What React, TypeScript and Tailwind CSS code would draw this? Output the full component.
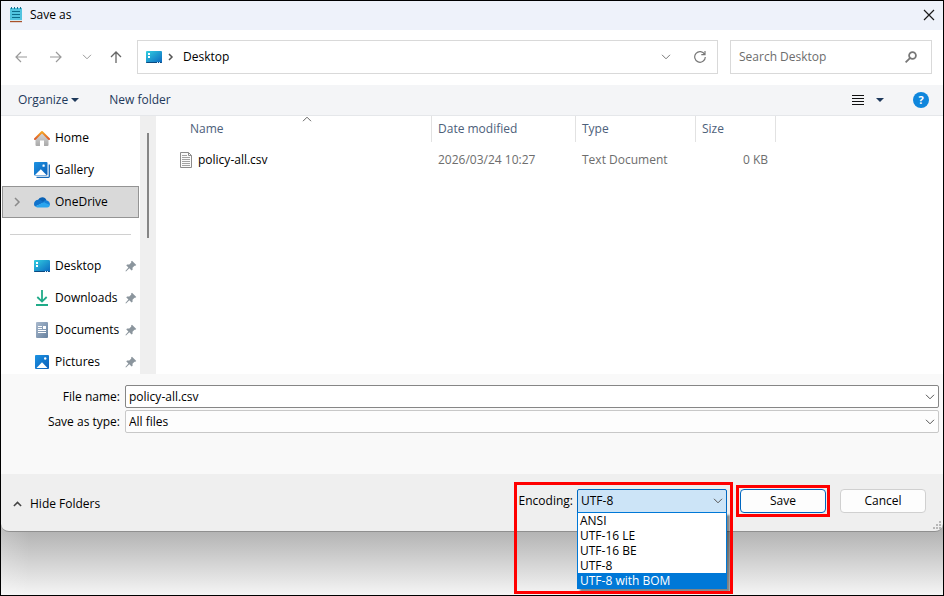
import type { ReactNode } from 'react';

const encodings = ['ANSI', 'UTF-16 LE', 'UTF-16 BE', 'UTF-8', 'UTF-8 with BOM'];

function Chevron({ className = '' }: { className?: string }) {
  return (
    <svg viewBox="0 0 10 6" className={`w-[10px] h-[6px] ${className}`} fill="none" stroke="currentColor" aria-hidden="true">
      <path d="M1 .8 5 4.8 9 .8" />
    </svg>
  );
}

function CaretDown() {
  return (
    <svg viewBox="0 0 8 4" className="w-2 h-1" fill="#1e395b" aria-hidden="true">
      <path d="M0 0h8L4 4z" />
    </svg>
  );
}

function NotepadIcon() {
  return (
    <svg viewBox="0 0 12 17" className="w-3 h-[17px]" aria-hidden="true">
      <rect y="2" width="12" height="13" fill="#50c4e0" />
      <rect y="15" width="12" height="1.2" fill="#a9512a" />
      <rect y="14" width="12" height="1" fill="#d5e9ee" />
      <path d="M1.5 1v2M4.5 1v2M7.5 1v2M10.5 1v2" stroke="#17708f" />
      <path d="M2 5.5h8M2 8.500h8M2 11.500h8" stroke="#0c6c8b" />
    </svg>
  );
}

function DesktopIcon() {
  return (
    <svg viewBox="0 0 16 12" className="w-4 h-3" aria-hidden="true">
      <defs>
        <linearGradient id="desk" x1="0" y1="0" x2="1" y2="1">
          <stop offset="0" stopColor="#32cfe0" />
          <stop offset="1" stopColor="#0a66c0" />
        </linearGradient>
      </defs>
      <rect width="16" height="12" rx="1" fill="url(#desk)" />
      <path d="M0 11h16a1 1 0 0 1-1 1H1a1 1 0 0 1-1-1z" fill="#0b4a80" />
      <path d="M2 2h2v2H2zM2 5h2v2H2z" fill="#fff" />
      <path d="M11 11h1v1h-1zM13 11h1v1h-1z" fill="#d6ecff" />
    </svg>
  );
}

function HomeIcon() {
  return (
    <svg viewBox="0 0 16 16" className="w-4 h-4" aria-hidden="true">
      <defs>
        <linearGradient id="house" x1="0" y1="0" x2="0" y2="1">
          <stop offset="0" stopColor="#d9d9d9" />
          <stop offset="1" stopColor="#a9a9a9" />
        </linearGradient>
        <linearGradient id="roof" x1="0" y1="0" x2="0" y2="1">
          <stop offset="0" stopColor="#f5a623" />
          <stop offset="1" stopColor="#dd5b2b" />
        </linearGradient>
      </defs>
      <path d="M8 2.500 14.500 8.500V15a1 1 0 0 1-1 1H10v-5.500H6V16H2.500a1 1 0 0 1-1-1V8.500z" fill="url(#house)" />
      <path d="M1 9 8 2l7 7" fill="none" stroke="url(#roof)" strokeWidth="2" strokeLinecap="round" strokeLinejoin="round" />
    </svg>
  );
}

function PictureIcon({ stacked = false }: { stacked?: boolean }) {
  return (
    <svg viewBox="0 0 16 16" className="w-4 h-4" aria-hidden="true">
      <defs>
        <linearGradient id="pic" x1="0" y1="0" x2="1" y2="1">
          <stop offset="0" stopColor="#1c93e3" />
          <stop offset="1" stopColor="#0c5fb8" />
        </linearGradient>
      </defs>
      {stacked ? (
        <>
          <path d="M15.300 2.500V14.500a.8.8 0 0 1-.8.8H2.500" fill="none" stroke="#1668b8" strokeWidth="1.300" />
          <rect width="13.500" height="13.500" rx="1" fill="url(#pic)" />
          <path d="M1 13 6.800 7.200 12.500 13z" fill="#fff" />
          <rect x="8.500" y="2.500" width="2.200" height="2.200" rx=".5" fill="#fff" />
        </>
      ) : (
        <>
          <rect x="1" y="1" width="14" height="14" rx="1" fill="url(#pic)" />
          <path d="M2.500 14 8 8.300 13.500 14z" fill="#fff" />
          <circle cx="11.200" cy="4.500" r="1.200" fill="#fff" />
        </>
      )}
    </svg>
  );
}

function OneDriveIcon() {
  return (
    <svg viewBox="0 0 16 16" className="w-4 h-4" aria-hidden="true">
      <path d="M4 6a4.600 4.600 0 0 1 8.500.3L9 10z" fill="#0a62b5" />
      <path d="M4.500 5.800C2 5.700 0 7.600 0 10c0 1.200.5 2 1.200 2.600L10 8.600 7.500 6.800a5 5 0 0 0-3-1z" fill="#1173cc" />
      <path d="M12 6.200a4 4 0 0 0-2.800 1.300L13.500 12l2.300-1A4 4 0 0 0 12 6.200z" fill="#1580d8" />
      <path d="M1.200 12.600 9.500 8.200l6.300 2.600a2.600 2.600 0 0 1-2.600 2.600H3.200c-.8 0-1.500-.3-2-.8z" fill="#2aa5ee" />
    </svg>
  );
}

function DownloadIcon() {
  return (
    <svg viewBox="0 0 16 16" className="w-4 h-4" fill="none" stroke="#20ab89" strokeWidth="1.800" aria-hidden="true">
      <path d="M8 0v11M3.300 7 8 11.600 12.700 7M2 15h12" />
    </svg>
  );
}

function DocumentIcon() {
  return (
    <svg viewBox="0 0 16 16" className="w-4 h-4" aria-hidden="true">
      <defs>
        <linearGradient id="doc" x1="0" y1="0" x2="1" y2="1">
          <stop offset="0" stopColor="#a9b9cd" />
          <stop offset="1" stopColor="#66819f" />
        </linearGradient>
      </defs>
      <rect x="2" width="12" height="16" rx="1" fill="url(#doc)" />
      <path d="M4 4.500h4M4 6.500h4M4 8.500h8M4 10.500h8" stroke="#fff" />
      <rect x="9" y="4" width="3" height="3" fill="#fff" />
    </svg>
  );
}

function PinIcon() {
  return (
    <svg viewBox="0 0 12 12" className="w-3 h-3" aria-hidden="true">
      <path d="M7 .8 11.300 5l-1 .8-.8-.1-2 2 .1 2-1 .9-2.300-2.300L1 11.500l-.6-.6 3-3.400L1.200 5.300l1-.9 2.100.1 2-2-.2-.9z" fill="#8b959d" />
    </svg>
  );
}

function FileIcon() {
  return (
    <svg viewBox="0 0 12 16" className="w-3 h-4 shrink-0" fill="none" stroke="#8c8c8c" aria-hidden="true">
      <path d="M.5.500h8l3 3v12H.5z" fill="#fbfbfb" />
      <path d="M8.500.500v3h3" />
      <path d="M2 3.500h5M2 5.500h8M2 7.500h8M2 9.500h8M2 11.500h8M2 13.500h8" stroke="#a3a3a3" />
    </svg>
  );
}

function NavItem({ icon, label, pinned, selected }: { icon: ReactNode; label: string; pinned?: boolean; selected?: boolean }) {
  return (
    <li>
      <a
        href="#"
        className={
          selected
            ? 'flex items-center h-8 ml-px mr-px pl-[9px] pr-1 border border-[#949494] bg-[#d9d9d9]'
            : 'flex items-center h-8 pl-[11px] pr-[3px]'
        }
      >
        <span className="w-[22px] text-[#8a8a8a]">
          {selected && (
            <svg viewBox="0 0 10 10" className="w-[10px] h-[10px]" fill="none" stroke="currentColor" strokeWidth="1.500" aria-hidden="true">
              <path d="m3 1 4 4-4 4" />
            </svg>
          )}
        </span>
        {icon}
        <span className="ml-[5px] flex-1">{label}</span>
        {pinned && <PinIcon />}
      </a>
    </li>
  );
}

function Sidebar() {
  return (
    <nav className="flex shrink-0 w-[155px] overflow-hidden">
      <div className="flex-1 pt-[6px]">
        <ul>
          <NavItem icon={<HomeIcon />} label="Home" />
          <NavItem icon={<PictureIcon stacked />} label="Gallery" />
          <NavItem icon={<OneDriveIcon />} label="OneDrive" selected />
        </ul>
        <hr className="mt-4 mb-[15px] ml-[9px] mr-[9px] border-[#d0d0d0]" />
        <ul>
          <NavItem icon={<DesktopIcon />} label="Desktop" pinned />
          <NavItem icon={<DownloadIcon />} label="Downloads" pinned />
          <NavItem icon={<DocumentIcon />} label="Documents" pinned />
          <NavItem icon={<PictureIcon />} label="Pictures" pinned />
        </ul>
      </div>
      {/* Scrollbar */}
      <div className="w-4 bg-[#efefef] pt-[17px] pl-[7px]">
        <div className="w-[2px] h-[105px] bg-[#858585]"></div>
      </div>
    </nav>
  );
}

function FileList() {
  return (
    <div className="flex-1 overflow-hidden">
      <table className="table-fixed border-separate border-spacing-0 w-[620px] text-left">
        <colgroup>
          <col className="w-[276px]" />
          <col className="w-36" />
          <col className="w-[120px]" />
          <col className="w-20" />
        </colgroup>
        <thead className="text-[#4c607a]">
          <tr className="h-[26px]">
            <th className="p-0 font-normal border-r border-[#e2e2e2]">
              <div className="relative ml-[26px] pl-2 h-[26px] leading-[26px]">
                Name
                <Chevron className="absolute top-0 left-1/2 -ml-[5px] rotate-180 text-[#666]" />
              </div>
            </th>
            <th className="p-0 pl-[6px] font-normal border-r border-[#e2e2e2]">Date modified</th>
            <th className="p-0 pl-[6px] font-normal border-r border-[#e2e2e2]">Type</th>
            <th className="p-0 pl-[6px] font-normal border-r border-[#e2e2e2]">Size</th>
          </tr>
        </thead>
        <tbody className="text-[#6d6d6d]">
          <tr className="h-9">
            <td className="p-0 pl-6 text-black">
              <div className="flex items-center gap-[6px]">
                <FileIcon />
                policy-all.csv
              </div>
            </td>
            <td className="p-0 pl-[6px]">2026/03/24 10:27</td>
            <td className="p-0 pl-[6px]">Text Document</td>
            <td className="p-0 pr-2 text-right">0 KB</td>
          </tr>
        </tbody>
      </table>
    </div>
  );
}

function EncodingPicker() {
  return (
    <div className="relative flex items-center gap-1 z-20">
      <label htmlFor="encoding">Encoding:</label>
      <div className="relative">
        <select
          id="encoding"
          defaultValue="UTF-8"
          className="block appearance-none w-[150px] h-6 pl-[3px] border border-[#0067c0] rounded-t-xs bg-[#cce4f7] outline-none"
        >
          {encodings.map((name) => (
            <option key={name}>{name}</option>
          ))}
        </select>
        <Chevron className="absolute right-1 top-[9px] text-[#555] pointer-events-none" />
        <ul role="listbox" aria-label="Encoding" className="absolute left-0 top-[23px] w-[150px] border border-[#0078d7] bg-white shadow-[3px_3px_2px_rgba(0,0,0,0.45)]">
          {encodings.map((name) => (
            <li
              key={name}
              role="option"
              aria-selected={name === 'UTF-8 with BOM'}
              className="h-[15px] leading-[15px] pl-[2px] aria-selected:bg-[#0078d7] aria-selected:text-white"
            >
              {name}
            </li>
          ))}
        </ul>
      </div>
      {/* Callout around the open list */}
      <div className="absolute -left-[5px] -right-[6px] -top-[7px] h-[112px] border-3 border-[#f00] pointer-events-none"></div>
    </div>
  );
}

export default function App() {
  return (
    <div className="flex flex-col h-screen min-h-[480px] overflow-hidden border border-black bg-white font-['Open_Sans',sans-serif] text-[12px] leading-4 text-black">
      <main className="relative z-10 flex flex-col flex-1 min-h-0 rounded-b-lg border-b border-[#8f8f8f] bg-[#efefef]">
        {/* Title bar */}
        <header className="flex items-center h-[29px] shrink-0 pl-[9px] pr-2 pb-[2px] bg-[#eef2fa]">
          <NotepadIcon />
          <h1 className="ml-2 flex-1">Save as</h1>
          <button aria-label="Close">
            <svg viewBox="0 0 12 12" className="w-3 h-3" stroke="#1a1a1a" strokeWidth="1.200">
              <path d="m1 1 10 10M11 1 1 11" />
            </svg>
          </button>
        </header>

        {/* Navigation and address */}
        <div className="flex items-center h-[55px] shrink-0 pl-[14px] pr-[11px] pb-px bg-white text-[#9a9a9a]">
          <button aria-label="Back">
            <svg viewBox="0 0 12 12" className="w-3 h-3" fill="none" stroke="currentColor" strokeWidth="1.200">
              <path d="M12 6H1M6 1 1 6l5 5" />
            </svg>
          </button>
          <button aria-label="Forward" className="ml-[23px]">
            <svg viewBox="0 0 12 12" className="w-3 h-3" fill="none" stroke="currentColor" strokeWidth="1.200">
              <path d="M0 6h11M6 1l5 5-5 5" />
            </svg>
          </button>
          <button aria-label="Recent locations" className="ml-5">
            <Chevron />
          </button>
          <button aria-label="Up" className="ml-[18px] text-[#666]">
            <svg viewBox="0 0 12 12" className="w-3 h-3" fill="none" stroke="currentColor" strokeWidth="1.300">
              <path d="M6 12V1M1 6l5-5 5 5" />
            </svg>
          </button>
          <div className="flex items-center flex-1 h-[34px] ml-[15px] pl-2 pr-[11px] border border-[#d9d9d9]">
            <DesktopIcon />
            <svg viewBox="0 0 6 8" className="w-[6px] h-2 ml-[6px]" fill="none" stroke="#555" strokeWidth="1.500" aria-hidden="true">
              <path d="m1 1 3 3-3 3" />
            </svg>
            <a href="#" className="ml-[9px] flex-1 text-black">Desktop</a>
            <button aria-label="Previous locations" className="text-[#777]">
              <Chevron />
            </button>
            <button aria-label="Refresh" className="ml-[23px]">
              <svg viewBox="0 0 12 12" className="w-3 h-3" fill="none" stroke="#777" strokeWidth="1.200">
                <path d="M10.700 3.500A5.300 5.300 0 1 0 11.300 6M11 0v3.700H7.300" />
              </svg>
            </button>
          </div>
          <div className="flex items-center w-[202px] h-[34px] ml-3 pl-2 pr-[14px] border border-[#d9d9d9]">
            <input type="text" aria-label="Search Desktop" placeholder="Search Desktop" className="flex-1 min-w-0 outline-none text-black placeholder:text-[#6d6d6d]" />
            <button aria-label="Search">
              <svg viewBox="0 0 12 12" className="w-3 h-3" fill="none" stroke="#777" strokeWidth="1.800">
                <circle cx="7.500" cy="4.500" r="3.400" />
                <path d="M5.200 6.900.6 11.400" />
              </svg>
            </button>
          </div>
        </div>

        {/* Command bar */}
        <div className="flex items-center h-[31px] shrink-0 pl-[17px] pr-[14px] border-b border-[#e5e7ea] bg-[#f4f5f7] text-[#1e395b]">
          <button className="flex items-center gap-[3px]">
            Organize
            <CaretDown />
          </button>
          <button className="ml-[30px] flex-1 text-left">New folder</button>
          <button aria-label="Change view">
            <svg viewBox="0 0 12 10" className="w-3 h-[10px]" stroke="#111" shapeRendering="crispEdges">
              <path d="M0 .5h12M0 3.500h12M0 6.500h12M0 9.500h12" />
            </svg>
          </button>
          <button aria-label="More view options" className="ml-3">
            <CaretDown />
          </button>
          <button aria-label="Help" className="ml-[29px] w-4 h-4 rounded-full bg-[#0f86dc] text-white text-[11px] font-bold">
            ?
          </button>
        </div>

        {/* Folder tree and files */}
        <section className="flex flex-1 min-h-0 overflow-hidden bg-white">
          <Sidebar />
          <FileList />
        </section>

        {/* File name and type */}
        <section className="h-[100px] shrink-0 pt-[11px] pr-1 bg-[#f9f9f9]">
          <div className="flex items-center">
            <label htmlFor="filename" className="w-[119px] text-right">File name:</label>
            <div className="flex items-center flex-1 h-[23px] ml-[5px] pl-[3px] pr-[3px] border border-[#868686] rounded-xs bg-white">
              <input id="filename" type="text" defaultValue="policy-all.csv" className="flex-1 outline-none" />
              <button aria-label="Show recent names" className="text-[#555]">
                <Chevron />
              </button>
            </div>
          </div>
          <div className="flex items-center mt-[2px]">
            <label htmlFor="filetype" className="w-[119px] text-right">Save as type:</label>
            <div className="relative flex-1 ml-[5px]">
              <select id="filetype" className="block appearance-none w-full h-[23px] pl-[3px] border border-[#c8c8c8] rounded-xs bg-[#fdfdfd] outline-none">
                <option>All files</option>
              </select>
              <Chevron className="absolute right-1 top-[9px] text-[#555] pointer-events-none" />
            </div>
          </div>
        </section>

        {/* Actions */}
        <footer className="relative flex items-start justify-between h-[57px] shrink-0 pt-[15px] pl-3 pr-[17px]">
          <button className="flex items-center gap-2 h-[29px]">
            <svg viewBox="0 0 10 6" className="w-[9px] h-[6px]" fill="none" stroke="#444" strokeWidth="1.700" aria-hidden="true">
              <path d="M1 5.200 5 1.200l4 4" />
            </svg>
            Hide Folders
          </button>
          <div className="flex items-center">
            <EncodingPicker />
            <div className="relative ml-[13px]">
              <button className="block w-[86px] h-6 border border-[#0067c0] rounded-sm bg-[#fdfdfd]">Save</button>
              <div className="absolute -inset-1 border-3 border-[#f00] pointer-events-none"></div>
            </div>
            <button className="ml-[14px] w-[86px] h-6 border border-[#d0d0d0] rounded-sm bg-[#fdfdfd]">Cancel</button>
          </div>
          <svg viewBox="0 0 8 8" className="absolute right-[2px] bottom-[2px] w-2 h-2" fill="#b8b8b8" aria-hidden="true">
            <path d="M6 0h2v2H6zM3 3h2v2H3zM6 3h2v2H6zM0 6h2v2H0zM3 6h2v2H3zM6 6h2v2H6z" />
          </svg>
        </footer>
      </main>

      {/* Dialog shadow */}
      <div className="h-[71px] -mt-2 shrink-0 bg-linear-to-b from-[#acacac] to-[#f5f5f5]">
        <div className="h-full bg-linear-to-r from-white/20 via-transparent via-3% to-transparent"></div>
      </div>
    </div>
  );
}
